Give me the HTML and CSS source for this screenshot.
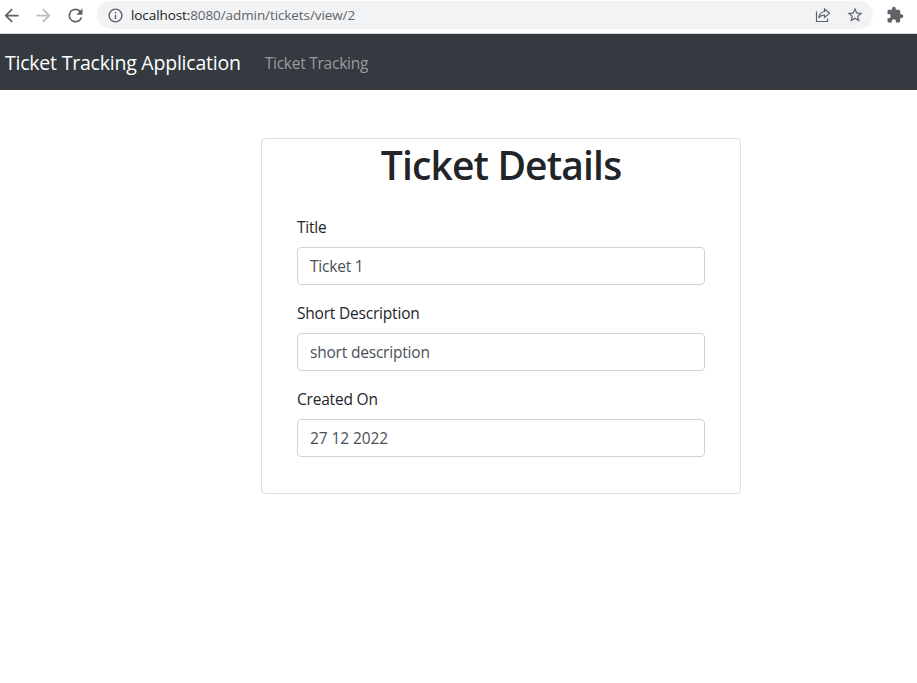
FILE: index.html
```html
<!DOCTYPE html>
<html lang="en">
<head>
<meta charset="utf-8">
<title>Ticket Tracking Application</title>
<link rel="stylesheet" href="styles.css">
</head>
<body>
<div class="toolbar">
  <svg class="icon back" viewBox="0 0 24 24"><path d="M20 11H7.83l5.59-5.59L12 4l-8 8 8 8 1.41-1.41L7.83 13H20v-2z"/></svg>
  <svg class="icon forward" viewBox="0 0 24 24"><path d="M12 4l-1.41 1.41L16.17 11H4v2h12.17l-5.58 5.59L12 20l8-8z"/></svg>
  <svg class="icon reload" viewBox="0 0 24 24"><path d="M17.65 6.35A7.96 7.96 0 0 0 12 4a8 8 0 1 0 7.73 10h-2.08A6 6 0 1 1 12 6c1.66 0 3.14.69 4.22 1.78L13 11h7V4l-2.35 2.35z"/></svg>
  <div class="address">
    <svg class="info" viewBox="0 0 24 24"><path d="M11 7h2v2h-2zm0 4h2v6h-2zm1-9a10 10 0 1 0 0 20 10 10 0 0 0 0-20zm0 18a8 8 0 1 1 0-16 8 8 0 0 1 0 16z"/></svg>
    <span class="url"><span class="host">localhost:</span>8080/admin/tickets/view/2</span>
    <svg class="share" viewBox="0 0 16 16"><path d="M1.500 4.500V14.500H12.500V11.500M9.500 2L14.500 6.300L9.500 10.500V8C7 8 5 9 3.700 11C4.200 7.500 6 5 9.500 4.500Z"/></svg>
    <svg class="star" viewBox="0 0 24 24"><path d="M22 9.24l-7.19-.62L12 2 9.19 8.63 2 9.24l5.46 4.73L5.82 21 12 17.27 18.18 21l-1.63-7.03L22 9.24zM12 15.4l-3.76 2.27 1-4.28-3.32-2.88 4.38-.38L12 6.1l1.71 4.04 4.38.38-3.32 2.88 1 4.28L12 15.4z"/></svg>
  </div>
  <svg class="puzzle" viewBox="0 0 24 24"><path d="M20.5 11H19V7c0-1.100-.9-2-2-2h-4V3.500a2.500 2.500 0 0 0-5 0V5H4c-1.100 0-2 .9-2 2v3.800h1.500a2.700 2.700 0 0 1 0 5.400H2V20c0 1.100.9 2 2 2h3.800v-1.500a2.700 2.700 0 0 1 5.400 0V22H17c1.100 0 2-.9 2-2v-4h1.500a2.500 2.500 0 0 0 0-5z"/></svg>
</div>
<nav class="navbar">
  <span class="brand">Ticket Tracking Application</span>
  <span class="nav-link">Ticket Tracking</span>
</nav>
<main class="card">
  <h1>Ticket Details</h1>
  <form class="card-body">
    <div class="group"><label>Title</label><div class="control">Ticket 1</div></div>
    <div class="group"><label>Short Description</label><div class="control">short description</div></div>
    <div class="group"><label>Created On</label><div class="control date">27 12 2022</div></div>
  </form>
</main>
</body>
</html>
```
FILE: styles.css
```css
* { box-sizing: border-box; }
body {
  margin: 0;
  min-height: 683px;
  background: #fff;
  color: #212529;
  font: 400 15.5px/24px "Open Sans", "Noto Sans", sans-serif;
}
svg { display: block; flex: none; fill: #5f6368; }
.toolbar {
  display: flex;
  align-items: center;
  height: 34px;
  padding-bottom: 3px;
  border-bottom: 1px solid #d5dadd;
}
.icon { width: 21px; height: 21px; }
.back { margin-left: 0.5px; }
.forward { margin-left: 11px; fill: #babcbe; }
.reload { margin-left: 11px; }
.address {
  display: flex;
  align-items: center;
  width: 776px;
  height: 28px;
  margin-left: 11.5px;
  border-radius: 14px;
  background: #f1f3f4;
}
.info { width: 17px; height: 17px; margin-left: 9.5px; }
.url {
  flex: 1;
  margin-left: 7.5px;
  font-size: 13.5px;
  letter-spacing: -0.09px;
  color: #5f6368;
  white-space: nowrap;
}
.host { color: #202124; }
.share { width: 16px; height: 16px; fill: none; stroke: #5f6368; stroke-width: 1.2; margin-right: 15px; }
.star { width: 18px; height: 18px; margin-right: 9px; }
.puzzle { width: 18px; height: 18px; margin-left: 13px; }
.navbar {
  display: flex;
  align-items: center;
  height: 56px;
  padding: 1px 0 0 5px;
  background: #343a40;
}
.brand {
  font-size: 19.5px;
  line-height: 30px;
  letter-spacing: -0.22px;
  color: #fff;
}
.nav-link { margin-left: 24px; letter-spacing: -0.25px; color: #999c9f; }
.card {
  width: 480px;
  height: 356px;
  margin: 48px 0 0 261px;
  border: 1px solid #dfdfdf;
  border-radius: 4px;
}
h1 {
  margin: 2px 0 0;
  font-size: 39px;
  font-weight: 600;
  line-height: 48px;
  letter-spacing: -0.85px;
  text-align: center;
}
.card-body { padding: 26px 35px 0; }
.group { margin-bottom: 16px; }
label { display: block; height: 32px; letter-spacing: -0.2px; }
.control {
  height: 38px;
  padding: 6px 12px;
  border: 1px solid #ced4da;
  border-radius: 4px;
  letter-spacing: -0.2px;
  color: #495057;
}
.date { letter-spacing: -0.08px; }
```
